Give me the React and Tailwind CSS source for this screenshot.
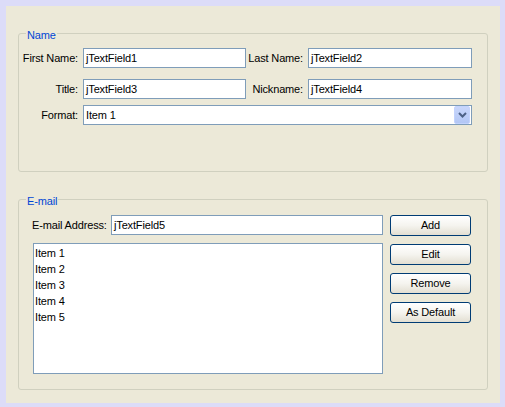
import React from 'react';

const FONT = { fontFamily: '"Liberation Sans", Arial, sans-serif' };

function Field({ value, className = '' }) {
  return (
    <div className={`h-[20px] bg-white border border-[#7f9db9] flex items-center pl-[2px] text-[11px] text-black ${className}`}>
      {value}
    </div>
  );
}

function XpButton({ children }) {
  return (
    <button className="h-[21px] w-[81px] rounded-[3px] border border-[#003c74] bg-gradient-to-b from-white via-[#f5f4ef] to-[#e3dfd2] text-[11px] text-black flex items-center justify-center">
      {children}
    </button>
  );
}

function Group({ title, className = '', children }) {
  return (
    <div className={`relative border border-[#d0d0bf] rounded-[3px] ${className}`}>
      <span className="absolute left-[7px] top-[-5px] px-[1px] bg-[#ece9d8] text-[11px] leading-[13px] text-[#0046d5]">
        {title}
      </span>
      {children}
    </div>
  );
}

export default function App() {
  const items = ['Item 1', 'Item 2', 'Item 3', 'Item 4', 'Item 5'];

  return (
    <div className="w-[505px] h-[407px] bg-[#dcdcf8] pl-[6px] pt-[6px] pr-[5px] pb-[4px] tracking-[-0.15px]" style={FONT}>
      <div className="w-full h-full bg-[#ece9d8] pt-[27px] px-[12px]">
        {/* Name */}
        <Group title="Name" className="h-[139px] pt-[14px] pr-[14px]">
          <div className="flex items-center">
            <span className="w-[59px] text-right text-[11px] text-black">First Name:</span>
            <Field value="jTextField1" className="ml-[5px] w-[163px]" />
            <span className="w-[57px] text-right text-[11px] text-black">Last Name:</span>
            <Field value="jTextField2" className="ml-[5px] w-[164px]" />
          </div>
          <div className="flex items-center mt-[11px]">
            <span className="w-[59px] text-right text-[11px] text-black">Title:</span>
            <Field value="jTextField3" className="ml-[5px] w-[163px]" />
            <span className="w-[57px] text-right text-[11px] text-black">Nickname:</span>
            <Field value="jTextField4" className="ml-[5px] w-[164px]" />
          </div>
          <div className="flex items-center mt-[6px]">
            <span className="w-[59px] text-right text-[11px] text-black">Format:</span>
            <div className="ml-[5px] w-[389px] h-[20px] bg-white border border-[#7f9db9] flex items-center justify-between pl-[2px] pr-[1px] text-[11px] text-black">
              <span>Item 1</span>
              <span className="w-[16px] h-[18px] rounded-[2px] border border-[#c3d3fd] bg-gradient-to-b from-[#c8d6fb] to-[#b3c7f5] flex items-center justify-center">
                <svg width="9" height="6" viewBox="0 0 9 6">
                  <path d="M1 1 L4.5 4.5 L8 1" fill="none" stroke="#4d6185" strokeWidth="2" />
                </svg>
              </span>
            </div>
          </div>
        </Group>

        {/* E-mail */}
        <Group title="E-mail" className="mt-[27px] h-[191px] pt-[15px] pl-[14px]">
          <div className="flex gap-[7px]">
            <div className="w-[350px] flex flex-col">
              <div className="flex items-center">
                <span className="text-[11px] text-black -ml-[1px]">E-mail Address:</span>
                <Field value="jTextField5" className="ml-auto w-[272px]" />
              </div>
              <div className="mt-[8px] h-[131px] bg-white border border-[#7f9db9] pl-[1px] pt-[1px]">
                {items.map((it) => (
                  <div key={it} className="text-[11px] leading-[16px] text-black">{it}</div>
                ))}
              </div>
            </div>
            <div className="flex flex-col gap-[8px]">
              <XpButton>Add</XpButton>
              <XpButton>Edit</XpButton>
              <XpButton>Remove</XpButton>
              <XpButton>As Default</XpButton>
            </div>
          </div>
        </Group>
      </div>
    </div>
  );
}
